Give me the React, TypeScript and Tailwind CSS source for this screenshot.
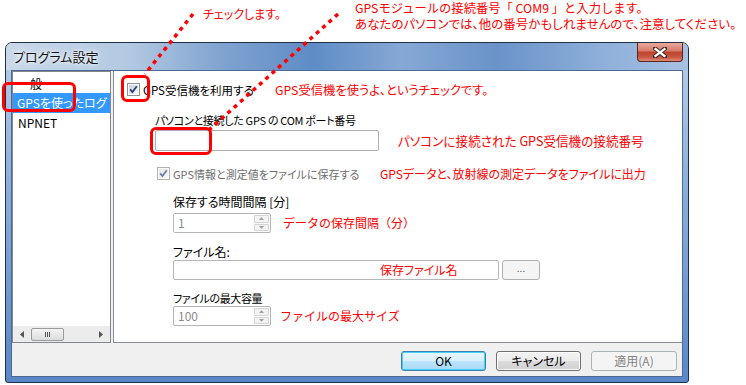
import React from "react";

const Check = ({ disabled = false }: { disabled?: boolean }) => (
  <svg width="13" height="13" viewBox="0 0 13 13" className="shrink-0">
    <defs>
      <linearGradient id={disabled ? "cbd" : "cb"} x1="0" y1="0" x2="1" y2="1">
        <stop offset="0" stopColor={disabled ? "#e6e6e6" : "#cbcfd5"} />
        <stop offset="1" stopColor={disabled ? "#f8f8f8" : "#f7f7f7"} />
      </linearGradient>
    </defs>
    <rect x="0.5" y="0.5" width="12" height="12" fill="#fff" stroke={disabled ? "#b1b1b1" : "#8e8f8f"} />
    <rect x="2" y="2" width="9" height="9" fill={`url(#${disabled ? "cbd" : "cb"})`} />
    <path d="M3.2 6.4 L5.4 9 L9.8 3.2" fill="none" stroke={disabled ? "#6b7fae" : "#2c3f7c"} strokeWidth="1.8" />
  </svg>
);

const Spin = ({ value }: { value: string }) => (
  <div className="flex h-[20px] w-[98px] items-stretch rounded-[2px] border border-[#b5b5b5] bg-white">
    <div className="flex flex-1 items-center pl-[4px] text-[#8a8a8a]">{value}</div>
    <div className="my-[1px] mr-[1px] flex w-[15px] flex-col gap-[1px]">
      <div className="flex flex-1 items-center justify-center rounded-[1px] border border-[#d5d5d5] bg-[#f3f3f3]">
        <svg width="5" height="3" viewBox="0 0 5 3"><path d="M0 3 L2.5 0 L5 3Z" fill="#a0a0a0" /></svg>
      </div>
      <div className="flex flex-1 items-center justify-center rounded-[1px] border border-[#d5d5d5] bg-[#f3f3f3]">
        <svg width="5" height="3" viewBox="0 0 5 3"><path d="M0 0 L2.5 3 L5 0Z" fill="#a0a0a0" /></svg>
      </div>
    </div>
  </div>
);

export default function App() {
  return (
    <div className="relative h-[385px] w-[746px] overflow-hidden bg-white font-['Noto_Sans_CJK_JP','Noto_Sans',sans-serif] text-[12px] leading-[12px] text-black [font-feature-settings:'palt']">
      {/* top annotations */}
      <div className="flex h-[42px] text-[12px] text-[#ff0000]">
        <div className="ml-[203px] mt-[8px] w-[152px] whitespace-nowrap leading-[12px]">チェックします。</div>
        <div className="flex flex-col whitespace-nowrap pt-[1px] leading-[15px]">
          <span className="text-[12.3px] [font-feature-settings:normal]">GPSモジュールの接続番号「 COM9 」と入力します。</span>
          <span className="text-[12.5px]">あなたのパソコンでは、他の番号かもしれませんので、注意してください。</span>
        </div>
      </div>

      {/* window */}
      <div className="ml-[5px] flex h-[341px] w-[684px] flex-col overflow-hidden rounded-t-[7px] rounded-b-[3px] border border-[#1d2e45] bg-[linear-gradient(180deg,#b9cfe8_0%,#8fb0da_40%,#5a87c9_100%)]">
        {/* title bar */}
        <div className="flex h-[27px] items-start justify-between bg-[linear-gradient(90deg,#c9d9ea_0%,#b3c9e2_18%,#7fa2d0_32%,#5f8cc6_45%,#86a8d5_58%,#6a93c9_72%,#8fb0da_88%,#a7c1e2_100%)]">
          <div className="pl-[7px] pt-[7px] text-[13px] leading-[13px] text-[#111] [text-shadow:0_0_6px_#ffffff,0_0_3px_#ffffff]">プログラム設定</div>
          <div className="mr-[5px] flex h-[19px] w-[46px] items-center justify-center rounded-b-[4px] border border-t-0 border-[#5a2520] bg-[linear-gradient(180deg,#e9a99b_0%,#d67a68_45%,#c0412f_50%,#c85a45_80%,#e08d73_100%)]">
            <svg width="14" height="11" viewBox="0 0 14 11">
              <path d="M2 1.5 L12 9.5 M12 1.5 L2 9.5" stroke="#3b2222" strokeWidth="4.2" strokeLinecap="square" />
              <path d="M2.5 2 L11.5 9 M11.5 2 L2.5 9" stroke="#ffffff" strokeWidth="2.3" strokeLinecap="square" />
            </svg>
          </div>
        </div>

        {/* client area */}
        <div className="mx-[5px] flex h-[307px] flex-col border border-[#4e6a92] bg-[#f0f0f0]">
          <div className="flex h-[272px]">
            {/* list */}
            <div className="flex w-[99px] flex-col border border-[#828790] bg-white">
              <div className="flex-1 pt-[3px]">
                <div className="flex h-[18px] items-center whitespace-nowrap pl-[5px]">一般</div>
                <div className="flex h-[20px] items-center overflow-hidden whitespace-nowrap bg-[#3399ff] pl-[4px] text-white">GPSを使ったログ</div>
                <div className="flex h-[20px] items-center whitespace-nowrap pl-[5px]">NPNET</div>
              </div>
              <div className="flex h-[16px] items-center bg-[#ececec]">
                <div className="flex w-[18px] justify-center">
                  <svg width="4" height="7" viewBox="0 0 4 7"><path d="M4 0 L0 3.5 L4 7Z" fill="#555" /></svg>
                </div>
                <div className="flex h-[13px] w-[33px] items-center justify-center rounded-[2px] border border-[#9a9a9a] bg-[linear-gradient(180deg,#f4f4f4,#dcdcdc)]">
                  <div className="flex gap-[1px]">
                    <div className="h-[5px] w-[1px] bg-[#555]" />
                    <div className="h-[5px] w-[1px] bg-[#555]" />
                    <div className="h-[5px] w-[1px] bg-[#555]" />
                  </div>
                </div>
                <div className="flex-1" />
                <div className="flex w-[18px] justify-center">
                  <svg width="4" height="7" viewBox="0 0 4 7"><path d="M0 0 L4 3.5 L0 7Z" fill="#555" /></svg>
                </div>
              </div>
            </div>

            {/* right panel */}
            <div className="relative ml-[2px] flex flex-1 flex-col border-b border-l border-[#898c95] bg-white">
              <div className="mt-[12px] flex h-[13px] items-center pl-[13px]">
                <Check />
                <span className="ml-[3px] w-[132px] whitespace-nowrap text-[11.5px]">GPS受信機を利用する</span>
                <span className="whitespace-nowrap text-[12.3px] text-[#ff0000]">GPS受信機を使うよ、というチェックです。</span>
              </div>
              <div className="mt-[18px] h-[12px] whitespace-nowrap pl-[41px] text-[11px] tracking-[-0.3px]">パソコンと接続した GPS の COM ポート番号</div>
              <div className="mt-[4px] flex items-center pl-[41px]">
                <div className="h-[21px] w-[224px] rounded-[2px] border border-[#abadb3] bg-white" />
                <span className="ml-[19px] whitespace-nowrap text-[12.6px] text-[#ff0000]">パソコンに接続された GPS受信機の接続番号</span>
              </div>
              <div className="mt-[16px] flex h-[13px] items-center pl-[43px]">
                <Check disabled />
                <span className="ml-[3px] w-[207px] whitespace-nowrap text-[11px] text-[#6d6d6d]">GPS情報と測定値をファイルに保存する</span>
                <span className="whitespace-nowrap text-[#ff0000]">GPSデータと、放射線の測定データをファイルに出力</span>
              </div>
              <div className="mt-[16px] h-[12px] whitespace-nowrap pl-[59px]">保存する時間間隔 [分]</div>
              <div className="mt-[5px] flex items-center pl-[59px]">
                <Spin value="1" />
                <span className="ml-[12px] whitespace-nowrap text-[#ff0000] [font-feature-settings:normal]">データの保存間隔（分）</span>
              </div>
              <div className="mt-[13px] h-[12px] whitespace-nowrap pl-[59px]">ファイル名:</div>
              <div className="mt-[2px] flex items-center pl-[59px]">
                <div className="relative h-[20px] w-[326px] rounded-[2px] border border-[#b5b5b5] bg-white">
                  <span className="absolute left-[206px] top-[3px] whitespace-nowrap text-[#ff0000]">保存ファイル名</span>
                </div>
                <div className="ml-[3px] flex h-[20px] w-[38px] items-start justify-center rounded-[3px] border border-[#b0b0b0] bg-[#f4f4f4] text-[10px] leading-[14px] text-[#555]">...</div>
              </div>
              <div className="mt-[12px] h-[12px] whitespace-nowrap pl-[59px] text-[11px] tracking-[-0.4px]">ファイルの最大容量</div>
              <div className="mt-[2px] flex items-center pl-[59px]">
                <Spin value="100" />
                <span className="ml-[9px] whitespace-nowrap text-[#ff0000] [font-feature-settings:normal]">ファイルの最大サイズ</span>
              </div>
            </div>
          </div>

          {/* buttons */}
          <div className="flex flex-1 items-start justify-end gap-[10px] pr-[5px] pt-[8px]">
            <div className="flex h-[20px] w-[85px] items-center justify-center rounded-[3px] border border-[#3c7fb1] bg-[linear-gradient(180deg,#eaf6fd_0%,#d9f0fc_50%,#bee6fd_50%,#a7d9f5_100%)] shadow-[inset_0_0_0_1px_#48d0f8]">OK</div>
            <div className="flex h-[20px] w-[85px] items-center justify-center rounded-[3px] border border-[#707070] bg-[linear-gradient(180deg,#f2f2f2_0%,#ebebeb_50%,#dddddd_50%,#cfcfcf_100%)] shadow-[inset_0_0_0_1px_#fcfcfc]">キャンセル</div>
            <div className="flex h-[20px] w-[86px] items-center justify-center rounded-[3px] border border-[#adb2b5] bg-[#f4f4f4] text-[#838383]">適用(A)</div>
          </div>
        </div>
      </div>

      {/* annotation overlays */}
      <svg className="pointer-events-none absolute left-0 top-0" width="746" height="385">
        <line x1="193" y1="14" x2="145" y2="74" stroke="#ff0000" strokeWidth="3.5" strokeDasharray="4 4.5" />
        <line x1="338" y1="14" x2="209" y2="130" stroke="#ff0000" strokeWidth="3.5" strokeDasharray="4 4.5" />
      </svg>
      <div className="pointer-events-none absolute left-[2px] top-[82px] h-[30px] w-[74px] rounded-[6px] border-[3px] border-[#ff0000]" />
      <div className="pointer-events-none absolute left-[121px] top-[75px] h-[27px] w-[29px] rounded-[6px] border-[3px] border-[#ff0000]" />
      <div className="pointer-events-none absolute left-[150px] top-[127px] h-[28px] w-[62px] rounded-[6px] border-[3px] border-[#ff0000]" />
    </div>
  );
}
